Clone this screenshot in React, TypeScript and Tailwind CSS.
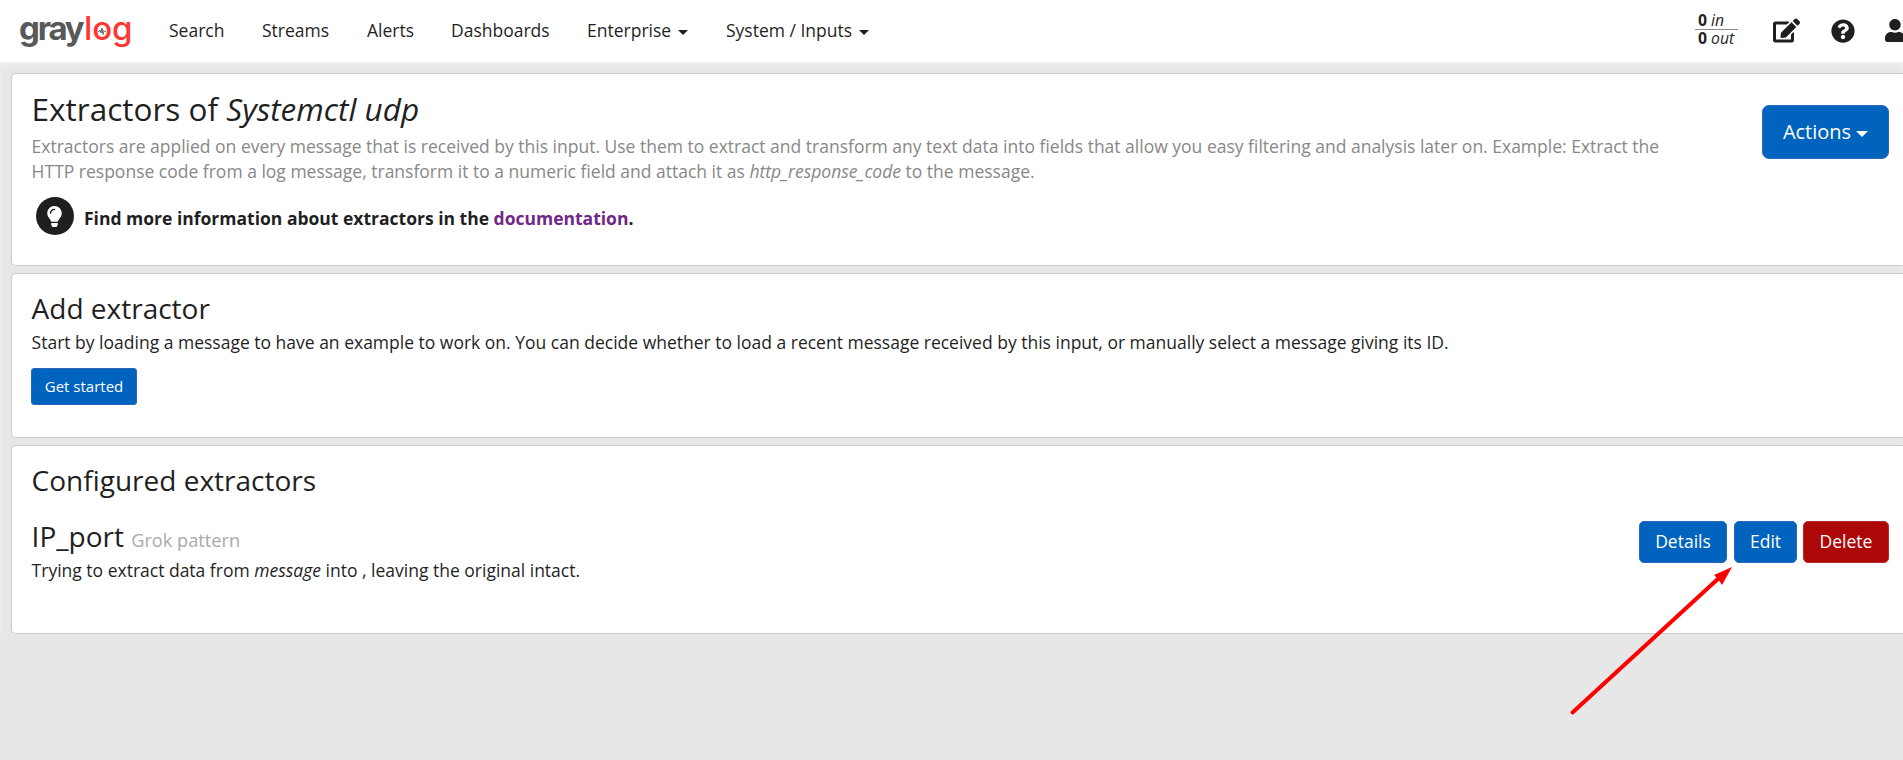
import React from "react";
import { FaEdit, FaQuestionCircle, FaUser, FaLightbulb } from "react-icons/fa";

const NAV = [
  { label: "Search", cls: "w-[93px]" },
  { label: "Streams", cls: "w-[105px]" },
  { label: "Alerts", cls: "w-[84px]" },
  { label: "Dashboards", cls: "w-[136px]" },
  { label: "Enterprise", cls: "w-[139px]", menu: true },
  { label: "System / Inputs", cls: "w-[160px]", menu: true },
];

function Caret({ large = false }: { large?: boolean }) {
  return (
    <span
      className={
        large
          ? "ml-[5px] mt-[6px] inline-block border-x-[6px] border-t-[6px] border-x-transparent border-t-current"
          : "ml-[7px] mt-[4px] inline-block border-x-[5px] border-t-[5px] border-x-transparent border-t-current"
      }
    />
  );
}

function Logo() {
  return (
    <div className="relative mb-[7px] flex w-[150px] items-start pl-[19px] font-['Inter'] text-[33px] leading-[40px]">
      <span className="w-[65px] font-bold tracking-[-2.2px] text-[#58595b]">gray</span>
      <span className="font-medium tracking-[-0.1px] text-[#ff3633]">log</span>
      <svg className="absolute left-[97px] top-[19px]" width="10" height="9" viewBox="0 0 10 9" fill="none" stroke="#58595b" strokeWidth="0.9">
        <path d="M1 4.500h1l1-1.500 1 3 1-5 1 6.500 1-4 .8 1h1" />
      </svg>
    </div>
  );
}

function Panel({ className, children }: { className: string; children: React.ReactNode }) {
  return (
    <section className={"rounded-l-[5px] border border-r-0 border-[#ccc] bg-white pl-[19px] " + className}>
      {children}
    </section>
  );
}

export default function App() {
  return (
    <div className="relative h-[760px] w-[1903px] overflow-hidden bg-[#e7e7e7] font-['Open_Sans',sans-serif] text-[17.5px] leading-[25px] text-[#1f1f1f]">
      <header className="flex h-[62px] items-center bg-white">
        <Logo />
        <nav className="ml-[19px] flex pb-px">
          {NAV.map((n) => (
            <div key={n.label} className={"flex shrink-0 items-center whitespace-nowrap " + n.cls}>
              {n.label}
              {n.menu && <Caret />}
            </div>
          ))}
        </nav>
        <div className="ml-auto flex items-center">
          <div className="mr-[35px] w-[43px] pb-[3px] text-[15.75px] leading-[17px]">
            <div className="border-b border-[#8c8c8c] pl-[3px]"><b>0</b> <i>in</i></div>
            <div className="pl-[3px]"><b>0</b> <i>out</i></div>
          </div>
          <FaEdit className="mb-[2px] mr-[31px] size-[27px]" />
          <FaQuestionCircle className="mb-px mr-[30px] size-[24px]" />
          <div className="mb-[2px] w-[18px] overflow-hidden">
            <FaUser className="h-[23px] w-[20px]" />
          </div>
        </div>
      </header>
      <main className="flex flex-col gap-[7px] pl-[11px] pt-[11px] shadow-[inset_0_4px_6px_-2px_#f4f4f4]">
        <Panel className="flex h-[193px] justify-between pr-[14px]">
          <div className="w-[1650px] pt-[13px] pl-[0.6px]">
            <h1 className="text-[31.5px] leading-[44px]">Extractors of <i>Systemctl udp</i></h1>
            <p className="mt-[3px] text-[#888]">
              Extractors are applied on every message that is received by this input. Use them to extract and transform any text data into fields that allow you easy filtering and analysis later on. Example: Extract the<br />
              HTTP response code from a log message, transform it to a numeric field and attach it as <i>http_response_code</i> to the message.
            </p>
            <div className="mt-[13px] flex items-center font-bold">
              <span className="mb-px ml-[4.4px] mr-[10px] flex size-[38px] items-center justify-center rounded-full bg-[#1f1f1f] text-white">
                <FaLightbulb className="size-[21px]" />
              </span>
              <span className="pt-[4px]">Find more information about extractors in the <a className="text-[#702785]">documentation</a>.</span>
            </div>
          </div>
          <button className="mt-[31px] flex h-[54px] w-[127px] items-center justify-center rounded-[7px] border border-[#2b66bd] bg-[#0063be] pb-[2px] text-[20px] text-white">
            Actions<Caret large />
          </button>
        </Panel>
        <Panel className="h-[165px] pt-[15px]">
          <h2 className="pl-[0.6px] text-[28px] leading-[38px]">Add extractor</h2>
          <p className="mt-[3px] pl-[0.6px]">Start by loading a message to have an example to work on. You can decide whether to load a recent message received by this input, or manually select a message giving its ID.</p>
          <button className="mt-[13px] flex h-[37px] w-[106px] items-center justify-center rounded-[3px] border border-[#2b66bd] bg-[#0063be] text-[15px] text-white">Get started</button>
        </Panel>
        <Panel className="h-[189px] pr-[14px] pt-[15px]">
          <h2 className="pl-[0.6px] text-[28px] leading-[38px]">Configured extractors</h2>
          <div className="mt-[18px] flex justify-between">
            <div className="pl-[0.6px]">
              <h3 className="h-[38px] text-[28px] leading-[38px]">IP_port <small className="text-[18.2px] text-[#aaa]">Grok pattern</small></h3>
              <p className="mt-[3px]">Trying to extract data from <i>message</i> into , leaving the original intact.</p>
            </div>
            <div className="mt-[4px] flex gap-[7px] text-white">
              <button className="h-[42px] w-[88px] rounded-[5px] border border-[#2b66bd] bg-[#0063be] pb-[2px]">Details</button>
              <button className="h-[42px] w-[63px] rounded-[5px] border border-[#2b66bd] bg-[#0063be] pb-[2px]">Edit</button>
              <button className="-ml-px h-[42px] w-[86px] rounded-[5px] border border-[#b52a2a] bg-[#ad0707] pb-[2px]">Delete</button>
            </div>
          </div>
        </Panel>
      </main>
      <svg className="absolute left-[1560px] top-[560px]" width="180" height="160" viewBox="0 0 180 160">
        <path d="M12.5 152.500 160 17" stroke="#f00" strokeWidth="4" strokeLinecap="round" />
        <path d="M172 7 154 15l4 4 4 6z" fill="#f00" />
      </svg>
    </div>
  );
}
